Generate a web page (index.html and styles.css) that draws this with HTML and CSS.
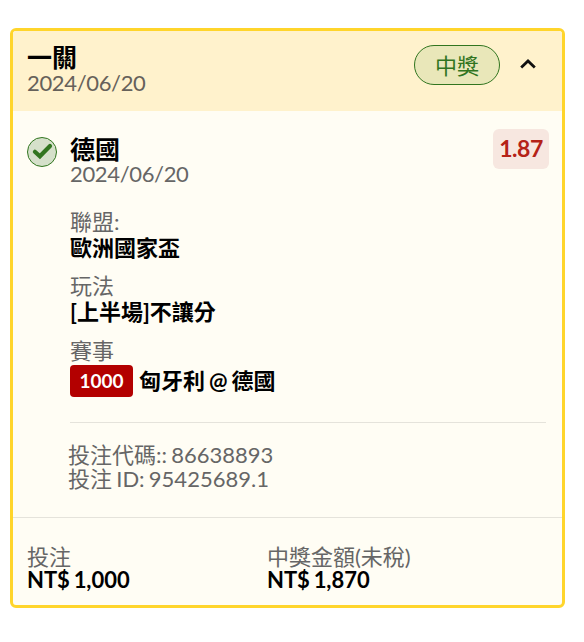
FILE: index.html
```
<!DOCTYPE html>
<html lang="zh-Hant">
<head>
<meta charset="utf-8">
<title>投注</title>
<link rel="stylesheet" href="styles.css">
</head>
<body>
<article class="card">
  <header class="head">
    <div class="head-text">
      <h1 class="title">一關</h1>
      <p class="date">2024/06/20</p>
    </div>
    <span class="status">中獎</span>
    <svg class="chevron" viewBox="0 0 18 12" width="18" height="12"><path d="M2.2 9.5 9 2.9l6.8 6.6" fill="none" stroke="#111" stroke-width="2.8"/></svg>
  </header>
  <section class="bet">
    <svg class="check" viewBox="0 0 30 30" width="30" height="30"><circle cx="15" cy="15" r="14.5" fill="#d5e0ca" stroke="#31751f"/><path d="M7.9 14.8 12.9 19.3 23 9" fill="none" stroke="#31751f" stroke-width="4.2" stroke-linecap="round"/></svg>
    <div class="detail">
      <div class="pick">
        <div>
          <h2 class="title">德國</h2>
          <p class="date">2024/06/20</p>
        </div>
        <span class="odds">1.87</span>
      </div>
      <dl class="facts">
        <div class="fact"><dt>聯盟:</dt><dd>歐洲國家盃</dd></div>
        <div class="fact"><dt>玩法</dt><dd>[上半場]不讓分</dd></div>
        <div class="fact"><dt>賽事</dt><dd class="match"><span class="code">1000</span><span>匈牙利 @ 德國</span></dd></div>
      </dl>
      <div class="ids">
        <p>投注代碼:: 86638893</p>
        <p>投注 ID: 95425689.1</p>
      </div>
    </div>
  </section>
  <footer class="totals">
    <div><p class="label">投注</p><p class="amount">NT$ 1,000</p></div>
    <div><p class="label">中獎金額(未稅)</p><p class="amount">NT$ 1,870</p></div>
  </footer>
</article>
</body>
</html>
```
FILE: styles.css
```
* { box-sizing: border-box; }
body, h1, h2, p, dl, dd { margin: 0; }
body {
  padding: 28px 19px 0 10px;
  background: #fff;
  color: #000;
  font: 22px/24px Lato, "Noto Sans CJK TC", sans-serif;
  word-spacing: -1.4px;
}
svg { display: block; flex: none; }
.card {
  height: 580px;
  border: 3px solid #ffd52b;
  border-radius: 6px;
  background: #fffdf4;
  overflow: hidden;
}
.head {
  display: flex;
  align-items: flex-start;
  height: 80px;
  padding: 14px 25px 0 14px;
  background: #fff2cc;
}
.head-text { flex: 1; }
.title { font-size: 25px; line-height: 25px; font-weight: 700; }
.date { color: #666; letter-spacing: -0.35px; }
.head .title { margin-bottom: 1px; }
.head .date { color: #66615a; }
.status {
  width: 86px;
  height: 40px;
  border: 1px solid #31751f;
  border-radius: 20px;
  background: #e9e7b9;
  color: #31751f;
  line-height: 39px;
  text-align: center;
}
.chevron { margin: 13px 0 0 19px; }
.bet {
  display: flex;
  height: 406px;
  padding: 26px 13px 0 14px;
}
.detail { flex: 1; margin-left: 13px; }
.pick { display: flex; justify-content: space-between; align-items: flex-start; }
.odds {
  width: 56px;
  height: 40px;
  margin-top: -8px;
  border-radius: 6px;
  background: #f7e7e0;
  color: #b52217;
  font-size: 23px;
  font-weight: 700;
  line-height: 39px;
  letter-spacing: -0.5px;
  text-align: center;
}
.facts {
  height: 237px;
  margin-right: 3px;
  padding-top: 24px;
  border-bottom: 1px solid #e5e3db;
}
.fact { margin-bottom: 14px; }
.fact:last-child { padding-top: 1px; }
dt { height: 26px; color: #666; }
dd { height: 24px; font-weight: 700; }
.match { display: flex; align-items: center; gap: 6px; height: 32px; }
.code {
  width: 63px;
  height: 32px;
  border-radius: 4px;
  background: #b30000;
  color: #fff;
  font-size: 19px;
  line-height: 32px;
  text-align: center;
}
.ids { margin: 20px 0 0 -2px; color: #666; }
.totals {
  display: grid;
  grid-template-columns: 240px 1fr;
  padding: 27px 14px 0;
  border-top: 1px solid #e5e3db;
}
.label { line-height: 23px; color: #666; }
.amount { line-height: 24px; font-weight: 700; letter-spacing: -0.05px; }
```
